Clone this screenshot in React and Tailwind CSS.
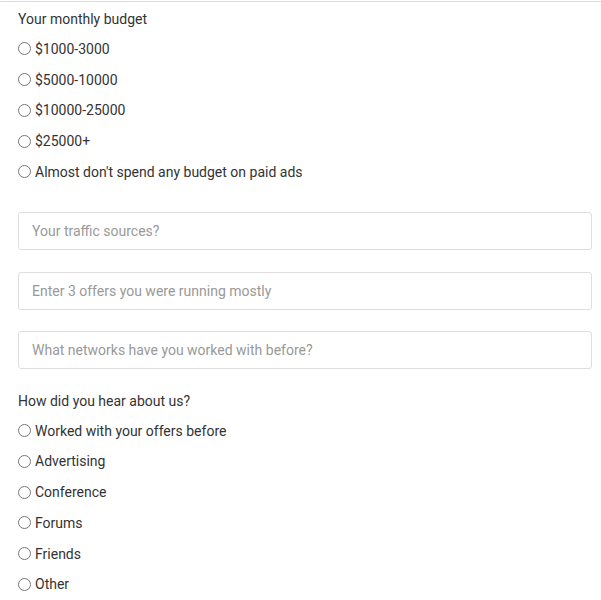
import React from 'react';

const BUDGETS = ['$1000-3000', '$5000-10000', '$10000-25000', '$25000+', "Almost don't spend any budget on paid ads"];
const SOURCES = ['Worked with your offers before', 'Advertising', 'Conference', 'Forums', 'Friends', 'Other'];
const FIELDS = ['Your traffic sources?', 'Enter 3 offers you were running mostly', 'What networks have you worked with before?'];

function RadioRow({ name, label }) {
  return (
    <label className="flex h-[30.75px] items-center">
      <input type="radio" name={name} className="m-0 mr-[4px] h-[13px] w-[13px] accent-[#555]" />
      <span>{label}</span>
    </label>
  );
}

export default function App() {
  return (
    <div
      className="min-h-[600px] bg-white pt-px text-[14px] leading-[20px] text-[#333]"
      style={{ fontFamily: 'Roboto, "Liberation Sans", sans-serif' }}
    >
      <div className="border-t border-[#dcdcdc] pl-[18px] pr-[9px] pt-[7px]">
        {/* budget */}
        <div className="mb-[4.6px]">Your monthly budget</div>
        {BUDGETS.map((b) => (
          <RadioRow key={b} name="budget" label={b} />
        ))}

        {/* text fields */}
        <div className="mt-[24.8px] flex flex-col gap-[21.5px]">
          {FIELDS.map((f) => (
            <input
              key={f}
              type="text"
              placeholder={f}
              className="h-[38px] w-full rounded-[3px] border border-[#dedede] px-[13px] text-[14px] text-[#333] outline-none placeholder:text-[#999]"
            />
          ))}
        </div>

        {/* referral */}
        <div className="mb-[4.6px] mt-[21.5px]">How did you hear about us?</div>
        {SOURCES.map((s) => (
          <RadioRow key={s} name="source" label={s} />
        ))}
      </div>
    </div>
  );
}
